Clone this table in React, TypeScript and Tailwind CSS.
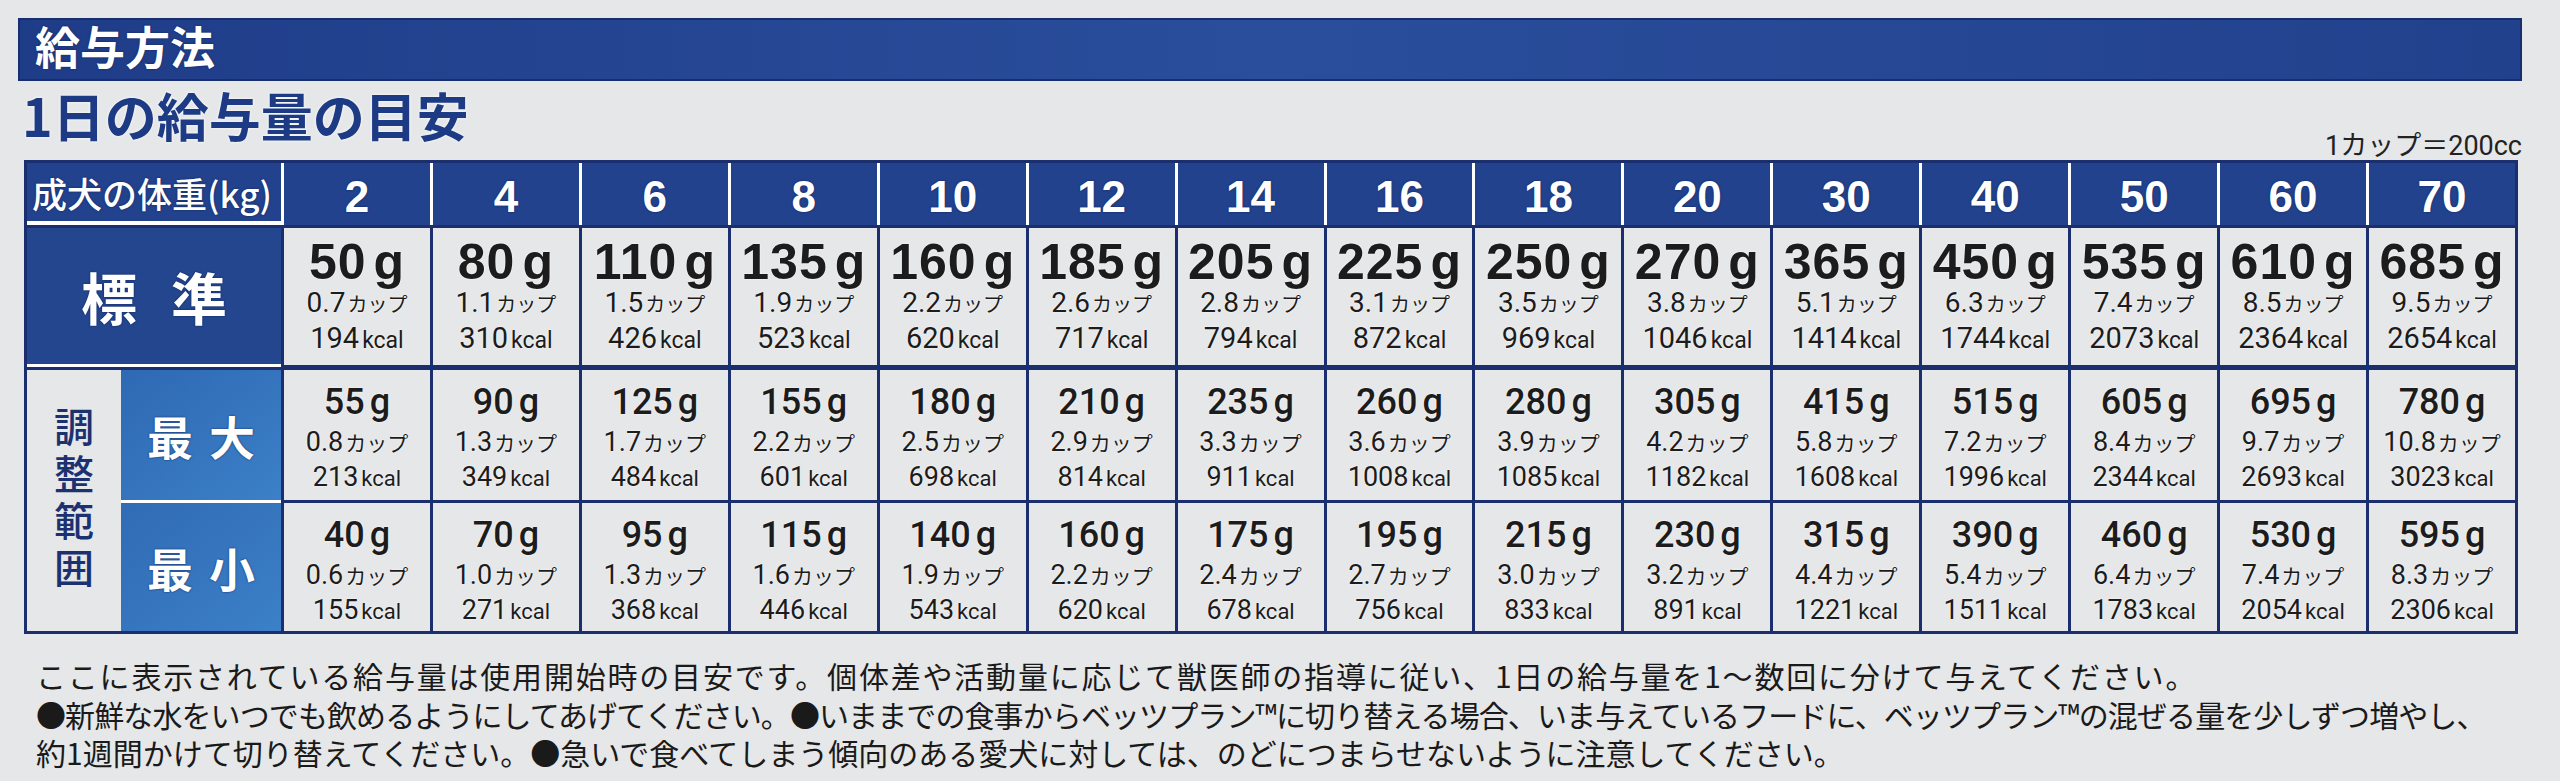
import React from "react";

// 体重ごとの給与量 (g, カップ, kcal)
const weights = ["2", "4", "6", "8", "10", "12", "14", "16", "18", "20", "30", "40", "50", "60", "70"];

const standard = [
  ["50", "0.7", "194"],
  ["80", "1.1", "310"],
  ["110", "1.5", "426"],
  ["135", "1.9", "523"],
  ["160", "2.2", "620"],
  ["185", "2.6", "717"],
  ["205", "2.8", "794"],
  ["225", "3.1", "872"],
  ["250", "3.5", "969"],
  ["270", "3.8", "1046"],
  ["365", "5.1", "1414"],
  ["450", "6.3", "1744"],
  ["535", "7.4", "2073"],
  ["610", "8.5", "2364"],
  ["685", "9.5", "2654"],
];

const maximum = [
  ["55", "0.8", "213"],
  ["90", "1.3", "349"],
  ["125", "1.7", "484"],
  ["155", "2.2", "601"],
  ["180", "2.5", "698"],
  ["210", "2.9", "814"],
  ["235", "3.3", "911"],
  ["260", "3.6", "1008"],
  ["280", "3.9", "1085"],
  ["305", "4.2", "1182"],
  ["415", "5.8", "1608"],
  ["515", "7.2", "1996"],
  ["605", "8.4", "2344"],
  ["695", "9.7", "2693"],
  ["780", "10.8", "3023"],
];

const minimum = [
  ["40", "0.6", "155"],
  ["70", "1.0", "271"],
  ["95", "1.3", "368"],
  ["115", "1.6", "446"],
  ["140", "1.9", "543"],
  ["160", "2.2", "620"],
  ["175", "2.4", "678"],
  ["195", "2.7", "756"],
  ["215", "3.0", "833"],
  ["230", "3.2", "891"],
  ["315", "4.4", "1221"],
  ["390", "5.4", "1511"],
  ["460", "6.4", "1783"],
  ["530", "7.4", "2054"],
  ["595", "8.3", "2306"],
];

const StdCell = ({ g, cup, kcal }: { g: string; cup: string; kcal: string }) => (
  <div className="flex flex-col items-center bg-[#e6e7e9] border-b-2 border-[#1b2f6e] pt-[9px] text-[#1c1c1c] [text-shadow:0_0_2px_#fff]">
    <div className="flex items-baseline leading-[50px] text-[50px] font-bold tracking-[1px] font-['Liberation_Sans',sans-serif]">
      <span>{g}</span>
      <span className="ml-[7px]">g</span>
    </div>
    <div className="flex items-baseline leading-[32px]">
      <span className="text-[28px] font-['Roboto',sans-serif]">{cup}</span>
      <span className="ml-[2px] text-[20px] font-['Noto_Sans_CJK_JP',sans-serif]">カップ</span>
    </div>
    <div className="flex items-baseline leading-[36px] font-['Roboto',sans-serif]">
      <span className="text-[29px]">{kcal}</span>
      <span className="ml-[3px] text-[23px]">kcal</span>
    </div>
  </div>
);

const AdjCell = ({ g, cup, kcal }: { g: string; cup: string; kcal: string }) => (
  <div className="flex flex-col items-center bg-[#e6e7e9] pt-[12px] text-[#1c1c1c] [text-shadow:0_0_2px_#fff]">
    <div className="flex items-baseline leading-[40px] text-[36px] font-medium font-['Roboto',sans-serif]">
      <span>{g}</span>
      <span className="ml-[5px]">g</span>
    </div>
    <div className="flex items-baseline leading-[40px]">
      <span className="text-[27px] font-['Roboto',sans-serif]">{cup}</span>
      <span className="ml-[2px] text-[21px] font-['Noto_Sans_CJK_JP',sans-serif]">カップ</span>
    </div>
    <div className="flex items-baseline leading-[30px] font-['Roboto',sans-serif]">
      <span className="text-[27px]">{kcal}</span>
      <span className="ml-[3px] text-[22px]">kcal</span>
    </div>
  </div>
);

export default function App() {
  return (
    <div className="w-[2560px] h-[781px] overflow-hidden bg-[#e6e7e9] pt-[18px] font-['Noto_Sans_CJK_JP',sans-serif]">
      {/* 見出しバー */}
      <div className="ml-[18px] w-[2504px] h-[63px] flex items-center pl-[15px] pb-[8px] border-2 border-[#172f6c] bg-linear-to-r from-[#1f3c88] via-[#2a4e9c] to-[#22418d]">
        <span className="text-white text-[45px] font-bold leading-none [text-shadow:0_0_2px_#0d1f52]">給与方法</span>
      </div>

      {/* サブ見出し */}
      <div className="ml-[22px] w-[2500px] h-[79px] flex justify-between">
        <div className="mt-[8px] text-[52px] leading-[52px] font-bold text-[#1d3a84] [text-shadow:0_0_3px_#fff]">
          1日の給与量の目安
        </div>
        <div className="self-end text-[27px] leading-[27px] text-[#222] font-['Roboto','Noto_Sans_CJK_JP',sans-serif]">
          1カップ＝200cc
        </div>
      </div>

      {/* 給与量テーブル */}
      <div className="ml-[24px] w-[2494px] h-[474px] border-[3px] border-[#1b2f6e] bg-[#1b2f6e] flex flex-col gap-[3px]">
        <div className="grid grid-cols-[254px_repeat(15,minmax(0,1fr))] gap-x-[3px] h-[62px] bg-white">
          <div className="bg-[#22428d] border-b-4 border-white flex items-center pl-[5px] text-white text-[35px] font-medium leading-none [text-shadow:0_0_2px_#0d1f52]">
            成犬の体重(kg)
          </div>
          {weights.map((w) => (
            <div
              key={w}
              className="bg-[#22428d] flex items-center justify-center pt-[6px] text-white text-[44px] font-bold leading-none font-['Liberation_Sans',sans-serif] [text-shadow:0_0_2px_#0d1f52]"
            >
              {w}
            </div>
          ))}
        </div>

        <div className="grid grid-cols-[254px_repeat(15,minmax(0,1fr))] grid-rows-[139px_130px_128px] gap-[3px] flex-1">
          <div className="bg-[#23468f] border-b-[3px] border-white flex items-center justify-center gap-[34px] text-white text-[56px] font-bold leading-none [text-shadow:0_0_2px_#0d1f52]">
            <span>標</span>
            <span>準</span>
          </div>
          {standard.map(([g, cup, kcal]) => (
            <StdCell key={"s" + g} g={g} cup={cup} kcal={kcal} />
          ))}

          <div className="row-span-2 flex">
            <div className="w-[94px] bg-[#e6e7e9] flex items-center justify-center">
              <span className="[writing-mode:vertical-rl] text-[40px] leading-none tracking-[7px] font-medium text-[#1c3170]">
                調整範囲
              </span>
            </div>
            <div className="flex-1 flex flex-col">
              <div className="h-[130px] bg-linear-to-br from-[#2f69b3] to-[#3b80c8] flex items-center justify-center gap-[16px] text-white text-[46px] font-bold leading-none [text-shadow:0_0_2px_#0d1f52]">
                <span>最</span>
                <span>大</span>
              </div>
              <div className="h-[3px] bg-white" />
              <div className="flex-1 bg-linear-to-br from-[#316bb5] to-[#3b80c8] flex items-center justify-center gap-[16px] text-white text-[46px] font-bold leading-none [text-shadow:0_0_2px_#0d1f52]">
                <span>最</span>
                <span>小</span>
              </div>
            </div>
          </div>
          {maximum.map(([g, cup, kcal]) => (
            <AdjCell key={"x" + g} g={g} cup={cup} kcal={kcal} />
          ))}
          {minimum.map(([g, cup, kcal]) => (
            <AdjCell key={"n" + g} g={g} cup={cup} kcal={kcal} />
          ))}
        </div>
      </div>

      {/* 注意書き */}
      <div className="ml-[36px] mt-[22px] text-[30px] leading-[38.5px] text-[#1a1a1a] whitespace-nowrap">
        <div className="tracking-[1.8px]">ここに表示されている給与量は使用開始時の目安です。個体差や活動量に応じて獣医師の指導に従い、1日の給与量を1～数回に分けて与えてください。</div>
        <div className="tracking-[-0.9px]">●新鮮な水をいつでも飲めるようにしてあげてください。●いままでの食事からベッツプラン™に切り替える場合、いま与えているフードに、ベッツプラン™の混ぜる量を少しずつ増やし、</div>
        <div>約1週間かけて切り替えてください。●急いで食べてしまう傾向のある愛犬に対しては、のどにつまらせないように注意してください。</div>
      </div>
    </div>
  );
}
